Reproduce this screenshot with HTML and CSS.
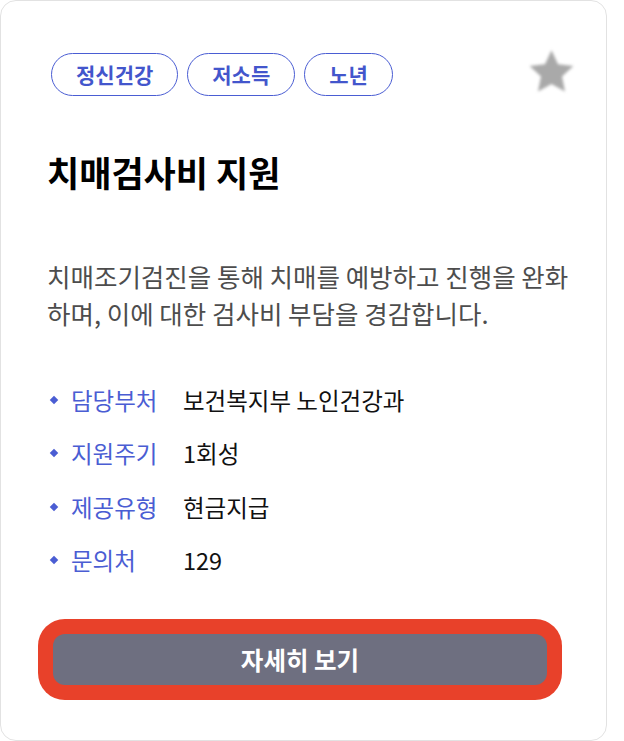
FILE: index.html
```html
<!doctype html>
<html>
    <head>
    <title>치매검사비 지원</title>
    <link rel="stylesheet" href="styles.css">
    </head>

    <body>
        <div class="card">
            <div class="card-head">
                <div class="tags">
                    <span class="tag">정신건강</span>
                    <span class="tag">저소득</span>
                    <span class="tag">노년</span>
                </div>
                <button class="fav" title="즐겨찾기">
                    <svg width="57" height="57" viewBox="0 0 24 24">
                        <path class="fav-star" d="M12 2.6l2.75 5.9 6.45.75-4.77 4.42 1.27 6.37L12 16.85 6.3 20.04l1.27-6.37L2.8 9.25l6.45-.75z"/>
                    </svg>
                </button>
            </div>

            <h2 class="card-title">치매검사비 지원</h2>

            <p class="card-desc">치매조기검진을 통해 치매를 예방하고 진행을 완화하며, 이에 대한 검사비 부담을 경감합니다.</p>

            <ul class="info">
                <li><span class="info-label">담당부처</span><span class="info-value">보건복지부 노인건강과</span></li>
                <li><span class="info-label">지원주기</span><span class="info-value">1회성</span></li>
                <li><span class="info-label">제공유형</span><span class="info-value">현금지급</span></li>
                <li><span class="info-label">문의처</span><span class="info-value">129</span></li>
            </ul>

            <button class="btn-detail">자세히 보기</button>
        </div>
    </body>
</html>
```

FILE: styles.css
```css
body {
    margin: 0;
    background: #fff;
    font-family: "Noto Sans CJK KR", "Noto Sans", sans-serif;
}

.card {
    box-sizing: border-box;
    width: 607px;
    height: 741px;
    border: 1px solid #e2e2e2;
    border-radius: 16px;
    padding: 52px 26px 0 46px;
    background: #fff;
}

.card-head {
    display: flex;
    justify-content: space-between;
    align-items: center;
    height: 43px;
}

.tags {
    display: flex;
    gap: 9px;
    margin-left: 4px;
}

.tag {
    box-sizing: border-box;
    height: 43px;
    padding: 0 24px;
    border: 1px solid #4a5dd3;
    border-radius: 22px;
    color: #4356cc;
    font-size: 21px;
    font-weight: 700;
    line-height: 41px;
}

.fav {
    margin-top: -4px;
    border: 0;
    padding: 0;
    background: none;
    cursor: pointer;
    line-height: 0;
}

.fav-star {
    fill: #a9a9a9;
    filter: blur(0.6px);
}

.card-title {
    margin: 54px 0 0;
    font-size: 35px;
    font-weight: 700;
    line-height: 44px;
    color: #000;
}

.card-desc {
    margin: 63px 5px 0 0;
    font-size: 25.5px;
    line-height: 37px;
    color: #4d4d4d;
}

.info {
    list-style: none;
    margin: 42px 0 0;
    padding: 0;
}

.info li {
    display: flex;
    align-items: center;
    height: 53.5px;
    font-size: 23.5px;
}

.info li::before {
    content: "";
    width: 6px;
    height: 6px;
    margin: 0 14px 0 4px;
    background: #4a5dd3;
    transform: rotate(45deg);
}

.info-label {
    width: 112px;
    color: #4a5dd3;
}

.info-value {
    color: #111;
}

.btn-detail {
    display: block;
    width: 494px;
    height: 51px;
    margin: 47px 0 0 6px;
    border: 0;
    border-radius: 12px;
    background: #6e6f80;
    box-shadow: 0 0 0 15px #e8412a;
    color: #fff;
    font-family: inherit;
    font-size: 24.5px;
    font-weight: 700;
    cursor: pointer;
}
```
